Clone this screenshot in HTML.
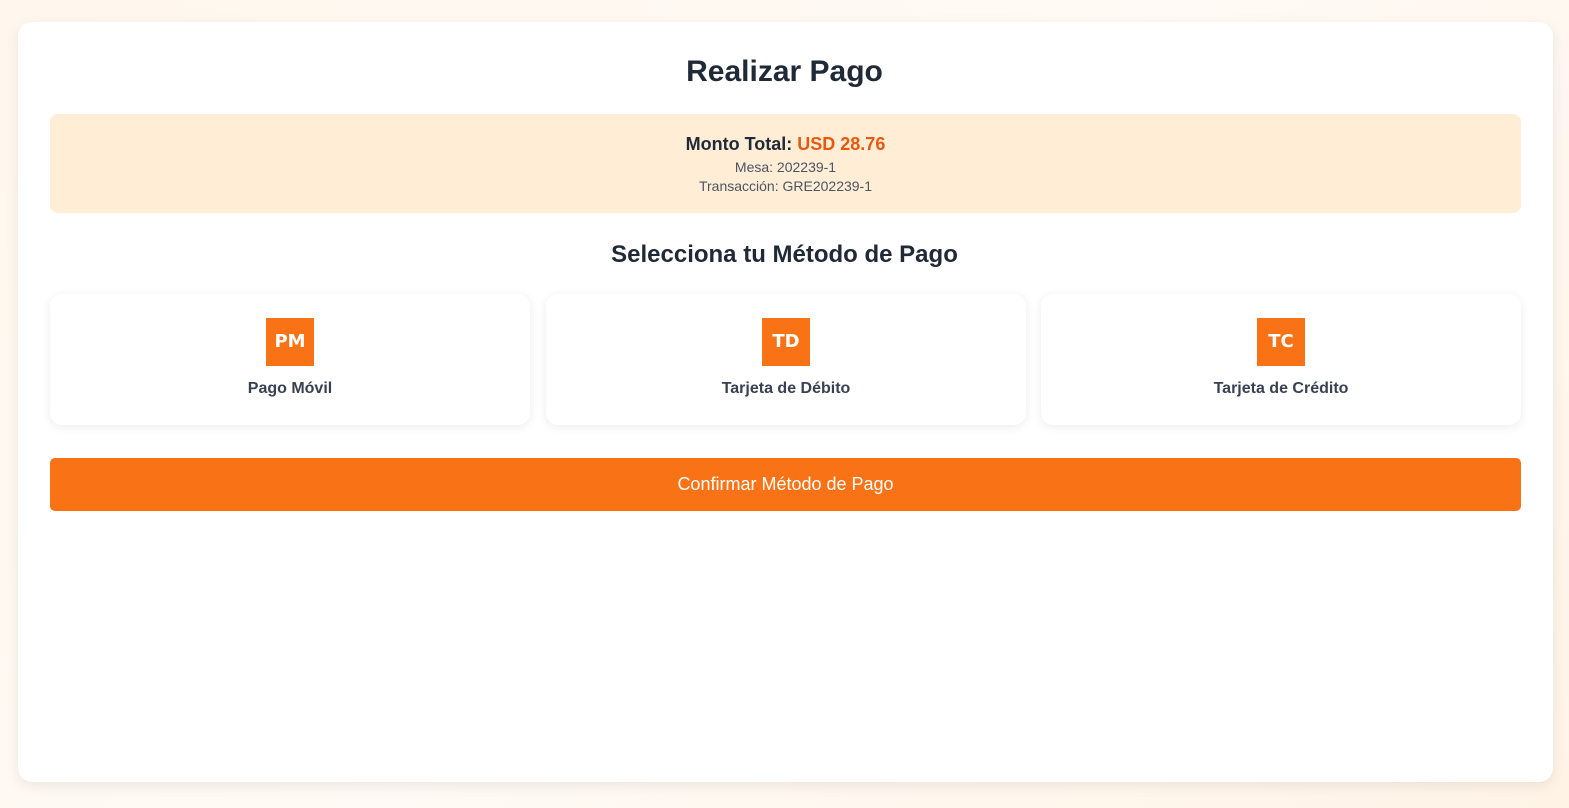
<!DOCTYPE html>
<html><head><meta charset="utf-8"><style>
*{box-sizing:border-box;margin:0;padding:0}
body{width:1569px;height:808px;background:linear-gradient(135deg,#fff7ed,#fffaf5 50%,#fff3e6);font-family:"Liberation Sans",sans-serif;overflow:hidden;position:relative}
.card{position:absolute;left:18px;top:22px;width:1535px;height:760px;background:#fff;border-radius:14px;box-shadow:0 4px 14px rgba(0,0,0,.08)}
h1{position:absolute;top:55px;width:100%;text-align:center;font-size:30px;font-weight:bold;color:#1f2937;left:0}
.sum{position:absolute;left:50px;top:114px;width:1471px;height:99px;background:#ffedd5;border-radius:8px;text-align:center;color:#1f2937}
.sum .t{margin-top:20px;font-size:18px;font-weight:bold}
.sum .t span{color:#ea580c}
.sum .s{font-size:14px;color:#4b5563;line-height:19px}
h2{position:absolute;top:241px;width:100%;left:0;text-align:center;font-size:24px;font-weight:bold;color:#1f2937}
.m{position:absolute;top:294px;width:480px;height:131px;background:#fff;border-radius:12px;box-shadow:0 2px 10px rgba(0,0,0,.08);text-align:center}
.ic{width:48px;height:48px;background:#f97316;color:#fff;font-weight:bold;font-size:18px;line-height:48px;margin:24px auto 0;font-family:"DejaVu Sans",sans-serif}
.m p{margin-top:14px;font-size:16px;font-weight:bold;color:#374151}
.btn{position:absolute;left:50px;top:458px;width:1471px;height:53px;background:#f97316;border-radius:5px;color:#fff;text-align:center;line-height:53px;font-size:18px}
</style></head><body>
<div class="card"></div>
<h1>Realizar Pago</h1>
<div class="sum"><div class="t">Monto Total: <span>USD 28.76</span></div><div class="s" style="margin-top:3px">Mesa: 202239-1</div><div class="s">Transacción: GRE202239-1</div></div>
<h2>Selecciona tu Método de Pago</h2>
<div class="m" style="left:50px"><div class="ic">PM</div><p>Pago Móvil</p></div>
<div class="m" style="left:546px"><div class="ic">TD</div><p>Tarjeta de Débito</p></div>
<div class="m" style="left:1041px"><div class="ic">TC</div><p>Tarjeta de Crédito</p></div>
<div class="btn">Confirmar Método de Pago</div>
</body></html>
